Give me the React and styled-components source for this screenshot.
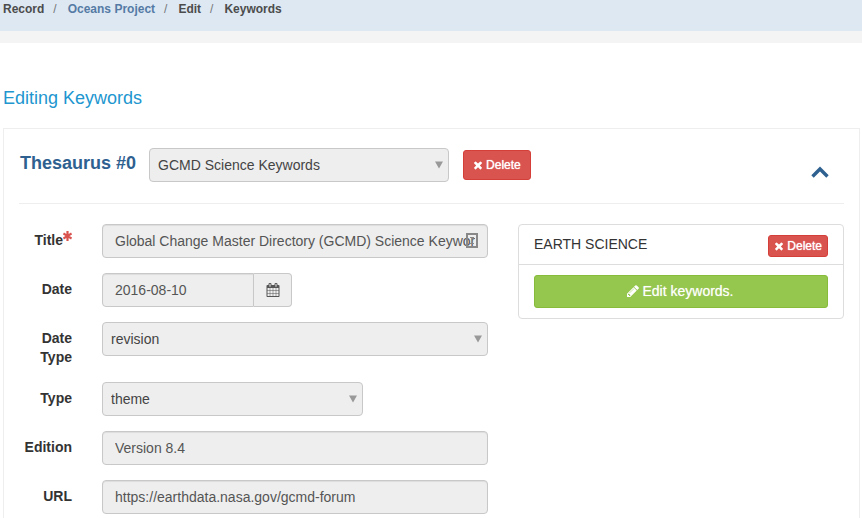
import React from 'react';
import styled, { createGlobalStyle, css } from 'styled-components';

const GlobalStyle = createGlobalStyle`
  *, *::before, *::after { box-sizing: border-box; }
  html { overflow: hidden; }
  body {
    margin: 0;
    background: #fff;
    color: #333;
    font: 14px/20px "Liberation Sans", Arial, sans-serif;
  }
  button, input, select { font: inherit; margin: 0; }
`;

const BreadcrumbBar = styled.nav`
  height: 43px;
  padding: 0 3px;
  background: #dde8f3;
  border-bottom: 12px solid #f4f4f4;
`;

const Breadcrumbs = styled.ol`
  display: flex;
  margin: 0;
  padding: 0;
  list-style: none;
  font-size: 12px;
  font-weight: bold;
  line-height: 18px;
  color: #4c4c4c;
`;

const Crumb = styled.li`
  & + &::before {
    content: '/';
    padding: 0 11px 0 9px;
    font-weight: normal;
    color: #777;
  }
`;

const CrumbLink = styled.a`
  color: #557ba5;
  text-decoration: none;
`;

const Main = styled.main`
  padding: 43px 2px 0 3px;
`;

const PageTitle = styled.h1`
  margin: 0 0 18px;
  font-size: 18px;
  font-weight: normal;
  line-height: 24px;
  color: #2196cf;
`;

const Panel = styled.section`
  padding: 0 15px 15px;
  border: 1px solid #eee;
`;

const PanelHeader = styled.header`
  display: flex;
  align-items: flex-start;
  padding: 19px 15px 21px 1px;
  border-bottom: 1px solid #eee;
`;

const PanelTitle = styled.label`
  margin-right: 13px;
  padding-top: 3px;
  font-size: 18px;
  font-weight: bold;
  line-height: 24px;
  color: #2e6090;
`;

const Toggle = styled.button`
  display: flex;
  margin: 18px 0 0 auto;
  padding: 0;
  border: 0;
  background: none;
  color: #2e6090;
  cursor: pointer;
`;

const PanelBody = styled.div`
  display: grid;
  grid-template-columns: 469fr 326fr;
  gap: 30px;
  align-items: start;
  padding-top: 20px;
`;

const Form = styled.form`
  display: grid;
  gap: 15px;
`;

const FormRow = styled.div`
  display: grid;
  grid-template-columns: 53px minmax(0, 1fr);
  gap: 30px;
  align-items: start;
`;

const Label = styled.label`
  padding-top: 7px;
  font-weight: bold;
  line-height: 19px;
  text-align: right;
  white-space: ${(p) => (p.$required ? 'nowrap' : 'normal')};
  svg { vertical-align: 4px; }
`;

const control = css`
  width: 100%;
  height: 34px;
  border: 1px solid #c8c8c8;
  border-radius: 4px;
  background: #eee;
`;

const TextInput = styled.input`
  ${control}
  padding: 6px 12px;
  color: #555;
  box-shadow: inset 0 1px 1px rgba(0, 0, 0, 0.075);
`;

const InputWrap = styled.div`
  position: relative;
`;

const FieldBadge = styled.svg`
  position: absolute;
  top: 9px;
  right: 10px;
`;

const SelectWrap = styled.div`
  position: relative;
  width: ${(p) => p.$width || '100%'};
  svg {
    position: absolute;
    top: 13px;
    right: 6px;
    pointer-events: none;
  }
`;

const SelectBox = styled.select`
  ${control}
  padding: 0 24px 0 8px;
  color: #444;
  appearance: none;
`;

const DateGroup = styled.div`
  display: flex;
  width: 190px;
`;

const DateInput = styled(TextInput)`
  flex: 1;
  min-width: 0;
  border-radius: 4px 0 0 4px;
`;

const DateButton = styled.button`
  display: flex;
  align-items: center;
  justify-content: center;
  width: 38px;
  height: 34px;
  padding: 0;
  border: 1px solid #c8c8c8;
  border-left: 0;
  border-radius: 0 4px 4px 0;
  background: #eee;
  color: #555;
`;

const buttonBase = css`
  display: flex;
  align-items: center;
  justify-content: center;
  border: 1px solid;
  border-radius: 3px;
  color: #fff;
  cursor: pointer;
`;

const DeleteButton = styled.button`
  ${buttonBase}
  gap: 3px;
  height: ${(p) => (p.$small ? '22px' : '30px')};
  padding: 0 ${(p) => (p.$small ? '5px' : '9px')};
  border-color: #d43f3a;
  background: #d9534f;
  font-size: 12px;
  line-height: 18px;
  text-shadow: 0 0 1px #fff;
`;

const HeaderDelete = styled(DeleteButton)`
  margin: 2px 0 0 14px;
`;

const EditButton = styled.button`
  ${buttonBase}
  gap: 2px;
  width: 100%;
  height: 33px;
  padding: 0 8px 2px 6px;
  border-color: #87bc3a;
  background: #95c64d;
  text-shadow: 0 0 1px rgba(255, 255, 255, 0.6);
`;

const KeywordList = styled.ul`
  margin: 0;
  padding: 0;
  border: 1px solid #ddd;
  border-radius: 4px;
  list-style: none;
`;

const KeywordItem = styled.li`
  display: flex;
  align-items: flex-start;
  justify-content: space-between;
  padding: 10px 15px;
  & + & { border-top: 1px solid #ddd; }
  &:first-child { padding-bottom: 7px; }
`;

const KeywordName = styled.span`
  line-height: 19px;
`;

const ICONS = {
  times: {
    ratio: 10 / 12,
    viewBox: '149 0 1493 1792',
    d: 'M1490 1322q0 40-28 68l-136 136q-28 28-68 28t-68-28l-294-294-294 294q-28 28-68 28t-68-28l-136-136q-28-28-28-68t28-68l294-294-294-294q-28-28-28-68t28-68l136-136q28-28 68-28t68 28l294 294 294-294q28-28 68-28t68 28l136 136q28 28 28 68t-28 68l-294 294 294 294q28 28 28 68z',
  },
  pencil: {
    ratio: 1,
    viewBox: '0 0 1792 1792',
    d: 'M491 1536l91-91-235-235-91 91v107h128v128h107zm523-928q0-22-22-22-10 0-17 7l-542 542q-7 7-7 17 0 22 22 22 10 0 17-7l542-542q7-7 7-17zm-54-192l416 416-832 832h-416v-416zm683 96q0 53-37 90l-166 166-416-416 166-165q36-38 90-38 53 0 91 38l235 234q37 39 37 91z',
  },
  calendar: {
    ratio: 1,
    viewBox: '0 0 1792 1792',
    d: 'M192 1664h288v-288h-288v288zm352 0h320v-288h-320v288zm-352-352h288v-320h-288v320zm352 0h320v-320h-320v320zm-352-384h288v-288h-288v288zm736 736h320v-288h-320v288zm-384-736h320v-288h-320v288zm768 736h288v-288h-288v288zm-384-352h320v-320h-320v320zm-352-864v-288q0-13-9.5-22.5t-22.5-9.5h-64q-13 0-22.5 9.5t-9.5 22.5v288q0 13 9.5 22.5t22.5 9.5h64q13 0 22.5-9.5t9.5-22.5zm736 864h288v-320h-288v320zm-384-384h320v-288h-320v288zm384 0h288v-288h-288v288zm32-480v-288q0-13-9.5-22.5t-22.5-9.5h-64q-13 0-22.5 9.5t-9.5 22.5v288q0 13 9.5 22.5t22.5 9.5h64q13 0 22.5-9.5t9.5-22.5zm384-64v1280q0 52-38 90t-90 38h-1408q-52 0-90-38t-38-90v-1280q0-52 38-90t90-38h128v-96q0-66 47-113t113-47h64q66 0 113 47t47 113v96h384v-96q0-66 47-113t113-47h64q66 0 113 47t47 113v96h128q52 0 90 38t38 90z',
  },
};

function Icon({ name, size }) {
  const { ratio, viewBox, d } = ICONS[name];
  return (
    <svg width={Math.round(size * ratio)} height={size} viewBox={viewBox} fill="currentColor" aria-hidden="true">
      <path d={d} />
    </svg>
  );
}

function Asterisk() {
  return (
    <svg width="9" height="10" viewBox="0 0 9 10" stroke="#d9534f" strokeWidth="2.2" aria-hidden="true">
      <path d="M4.5 0v10M0.4 2.5l8.2 5M8.6 2.5l-8.2 5" />
    </svg>
  );
}

function Select({ id, options, width }) {
  return (
    <SelectWrap $width={width}>
      <SelectBox id={id}>
        {options.map((option) => (
          <option key={option}>{option}</option>
        ))}
      </SelectBox>
      <svg width="8" height="8" viewBox="0 0 8 8" aria-hidden="true">
        <path d="M0 0.5h8L4 7.5z" fill="#999" />
      </svg>
    </SelectWrap>
  );
}

function Field({ id, label, required, children }) {
  return (
    <FormRow>
      <Label htmlFor={id} $required={required}>
        {label}
        {required && <Asterisk />}
      </Label>
      {children}
    </FormRow>
  );
}

export default function App() {
  return (
    <>
      <GlobalStyle />
      <BreadcrumbBar aria-label="Breadcrumb">
        <Breadcrumbs>
          <Crumb>Record</Crumb>
          <Crumb>
            <CrumbLink href="#project">Oceans Project</CrumbLink>
          </Crumb>
          <Crumb>Edit</Crumb>
          <Crumb>Keywords</Crumb>
        </Breadcrumbs>
      </BreadcrumbBar>
      <Main>
        <PageTitle>Editing Keywords</PageTitle>
        <Panel>
          <PanelHeader>
            <PanelTitle htmlFor="thesaurus">Thesaurus #0</PanelTitle>
            <Select id="thesaurus" options={['GCMD Science Keywords']} width="300px" />
            <HeaderDelete type="button">
              <Icon name="times" size={12} />
              Delete
            </HeaderDelete>
            <Toggle type="button" aria-label="Collapse thesaurus">
              <svg width="18" height="12" viewBox="0 0 18 12" fill="none" stroke="currentColor" strokeWidth="3.4">
                <path d="M1.5 10.5L9 3l7.5 7.5" />
              </svg>
            </Toggle>
          </PanelHeader>
          <PanelBody>
            <Form>
              <Field id="title" label="Title" required>
                <InputWrap>
                  <TextInput id="title" defaultValue="Global Change Master Directory (GCMD) Science Keywords" />
                  <FieldBadge width="12" height="15" viewBox="0 0 12 15" fill="none" stroke="#888" aria-hidden="true">
                    <path d="M1 1h10v13H1z" strokeWidth="2" />
                    <path d="M4 4.5h4M4 10.5h4M6 4.5v6" />
                  </FieldBadge>
                </InputWrap>
              </Field>
              <Field id="date" label="Date">
                <DateGroup>
                  <DateInput id="date" defaultValue="2016-08-10" />
                  <DateButton type="button" aria-label="Choose date">
                    <Icon name="calendar" size={14} />
                  </DateButton>
                </DateGroup>
              </Field>
              <Field id="date-type" label="Date Type">
                <Select id="date-type" options={['revision', 'creation', 'publication']} />
              </Field>
              <Field id="type" label="Type">
                <Select id="type" options={['theme', 'place', 'temporal']} width="261px" />
              </Field>
              <Field id="edition" label="Edition">
                <TextInput id="edition" defaultValue="Version 8.4" />
              </Field>
              <Field id="url" label="URL">
                <TextInput id="url" defaultValue="https://earthdata.nasa.gov/gcmd-forum" />
              </Field>
            </Form>
            <KeywordList>
              <KeywordItem>
                <KeywordName>EARTH SCIENCE</KeywordName>
                <DeleteButton type="button" $small>
                  <Icon name="times" size={12} />
                  Delete
                </DeleteButton>
              </KeywordItem>
              <KeywordItem>
                <EditButton type="button">
                  <Icon name="pencil" size={14} />
                  Edit keywords.
                </EditButton>
              </KeywordItem>
            </KeywordList>
          </PanelBody>
        </Panel>
      </Main>
    </>
  );
}
